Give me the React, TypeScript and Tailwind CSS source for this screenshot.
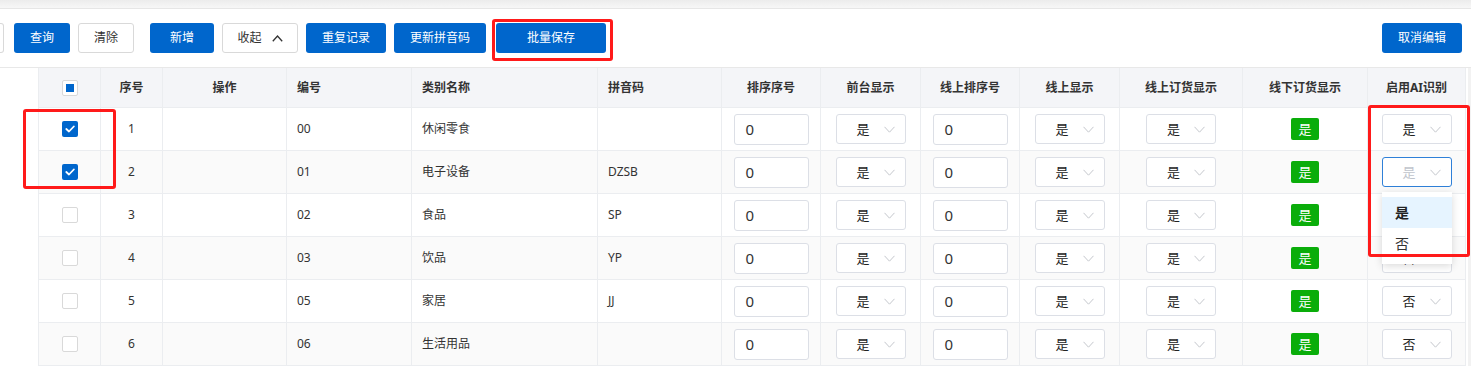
import React from "react";

const FONT = { fontFamily: '"Noto Sans", "Noto Sans CJK SC", sans-serif' };

const Chevron = ({ color = "#c4c7cc" }: { color?: string }) => (
  <svg width="11" height="7" viewBox="0 0 11 7" className="shrink-0">
    <path d="M0.5 0.8 L5.5 6.2 L10.5 0.8" stroke={color} strokeWidth="1" fill="none" />
  </svg>
);

const ChevronUp = () => (
  <svg width="11" height="7" viewBox="0 0 11 7" className="shrink-0">
    <path d="M0.8 6.2 L5.5 1 L10.2 6.2" stroke="#333" strokeWidth="1.3" fill="none" />
  </svg>
);

const Check = () => (
  <svg width="10" height="8" viewBox="0 0 10 8">
    <path d="M1.3 4 L4 6.5 L8.8 1.5" stroke="white" strokeWidth="1.8" fill="none" strokeLinecap="round" strokeLinejoin="round" />
  </svg>
);

const Checkbox = ({ checked }: { checked?: boolean }) =>
  checked ? (
    <div className="flex h-[16px] w-[16px] items-center justify-center rounded-[2px] bg-[#0066cc]">
      <Check />
    </div>
  ) : (
    <div className="h-[16px] w-[16px] rounded-[2px] border border-[#d9d9d9] bg-white" />
  );

const Select = ({ v, focused }: { v: string; focused?: boolean }) => (
  <div
    className={
      focused
        ? "flex h-[30px] w-[70px] items-center justify-between rounded-[3px] border border-[#2f80d8] bg-white pl-[20px] pr-[10px]"
        : "flex h-[30px] w-[70px] items-center justify-between rounded-[3px] border border-[#dcdfe6] bg-white pl-[20px] pr-[10px]"
    }
  >
    <span className={focused ? "text-[13px] leading-none text-[#c0c4cc]" : "text-[13px] leading-none text-[#222]"}>{v}</span>
    <Chevron />
  </div>
);

const Input = () => (
  <div className="flex h-[31px] w-[75px] items-center rounded-[3px] border border-[#dcdfe6] bg-white pl-[11px] text-[15px] leading-none text-[#333]">
    0
  </div>
);

const Badge = () => (
  <div className="flex h-[22px] w-[28px] items-center justify-center rounded-[2px] bg-[#0aad0a] text-[13px] leading-none text-white">
    是
  </div>
);

type Row = { checked: boolean; no: string; code: string; name: string; py: string; ai: string; focused?: boolean };

const rows: Row[] = [
  { checked: true, no: "1", code: "00", name: "休闲零食", py: "", ai: "是" },
  { checked: true, no: "2", code: "01", name: "电子设备", py: "DZSB", ai: "是", focused: true },
  { checked: false, no: "3", code: "02", name: "食品", py: "SP", ai: "是" },
  { checked: false, no: "4", code: "03", name: "饮品", py: "YP", ai: "否" },
  { checked: false, no: "5", code: "05", name: "家居", py: "JJ", ai: "否" },
  { checked: false, no: "6", code: "06", name: "生活用品", py: "", ai: "否" },
];

const headers: { t: string; left?: boolean }[] = [
  { t: "" },
  { t: "序号" },
  { t: "操作" },
  { t: "编号", left: true },
  { t: "类别名称", left: true },
  { t: "拼音码", left: true },
  { t: "排序序号" },
  { t: "前台显示" },
  { t: "线上排序号" },
  { t: "线上显示" },
  { t: "线上订货显示" },
  { t: "线下订货显示" },
  { t: "启用AI识别" },
];

const GRID =
  "grid grid-cols-[62px_62px_124px_125px_186px_124px_99px_100px_99px_100px_123px_125px_98px]";

const cellC = "flex items-center justify-center border-r border-b border-[#ebedf0]";
const cellL = "flex items-center justify-start pl-[10px] border-r border-b border-[#ebedf0]";

const BlueBtn = ({ children, w }: { children: React.ReactNode; w: string }) => (
  <button className={`flex h-[30px] ${w} items-center justify-center rounded-[3px] bg-[#0066cc] text-[12px] leading-none text-white`}>
    {children}
  </button>
);

const WhiteBtn = ({ children, w }: { children: React.ReactNode; w: string }) => (
  <button className={`flex h-[30px] ${w} items-center justify-center rounded-[3px] border border-[#d9d9d9] bg-white text-[12px] leading-none text-[#333]`}>
    {children}
  </button>
);

export default function App() {
  return (
    <div className="relative h-[369px] w-[1471px] overflow-hidden bg-white text-[#333]" style={FONT}>
      {/* top band */}
      <div className="h-[9px] border-b border-[#e6e6e6] bg-gradient-to-b from-[#ececec] to-[#f7f7f7]" />
      {/* toolbar */}
      <div className="flex h-[59px] items-center border-b border-[#e8e8e8]">
        <div className="h-[30px] w-[4px] rounded-r-[3px] border border-l-0 border-[#d9d9d9]" />
        <div className="ml-[10px]">
          <BlueBtn w="w-[56px]">查询</BlueBtn>
        </div>
        <div className="ml-[8px]">
          <WhiteBtn w="w-[56px]">清除</WhiteBtn>
        </div>
        <div className="ml-[16px]">
          <BlueBtn w="w-[64px]">新增</BlueBtn>
        </div>
        <div className="ml-[8px]">
          <WhiteBtn w="w-[76px]">
            <span className="mr-[10px]">收起</span>
            <ChevronUp />
          </WhiteBtn>
        </div>
        <div className="ml-[8px]">
          <BlueBtn w="w-[80px]">重复记录</BlueBtn>
        </div>
        <div className="ml-[8px]">
          <BlueBtn w="w-[92px]">更新拼音码</BlueBtn>
        </div>
        <div className="ml-[10px]">
          <BlueBtn w="w-[110px]">批量保存</BlueBtn>
        </div>
        <div className="ml-auto mr-[9px]">
          <BlueBtn w="w-[80px]">取消编辑</BlueBtn>
        </div>
      </div>

      {/* table */}
      <div className="flex">
        <div className="w-[38px] shrink-0" />
        <div className="border-l border-[#ebedf0]">
          <div className={`${GRID} h-[40px] bg-[#f4f5f8]`}>
            {headers.map((h, i) => (
              <div key={i} className={`${h.left ? cellL : cellC} text-[12px] font-bold leading-none text-[#333]`}>
                {i === 0 ? (
                  <div className="flex h-[16px] w-[16px] items-center justify-center rounded-[2px] border border-[#d9d9d9] bg-white">
                    <div className="h-[8px] w-[8px] bg-[#0066cc]" />
                  </div>
                ) : (
                  h.t
                )}
              </div>
            ))}
          </div>
          {rows.map((r, idx) => (
            <div key={idx} className={`${GRID} h-[43px] ${idx % 2 === 1 ? "bg-[#fafafa]" : "bg-white"} text-[12px] leading-none text-[#333]`}>
              <div className={cellC}>
                <Checkbox checked={r.checked} />
              </div>
              <div className={cellC}>{r.no}</div>
              <div className={cellC} />
              <div className={cellL}>{r.code}</div>
              <div className={cellL}>{r.name}</div>
              <div className={cellL}>{r.py}</div>
              <div className={cellC}>
                <Input />
              </div>
              <div className={cellC}>
                <Select v="是" />
              </div>
              <div className={cellC}>
                <Input />
              </div>
              <div className={cellC}>
                <Select v="是" />
              </div>
              <div className={cellC}>
                <Select v="是" />
              </div>
              <div className={cellC}>
                <Badge />
              </div>
              <div className={cellC}>
                <Select v={r.ai} focused={r.focused} />
              </div>
            </div>
          ))}
        </div>
        <div className="ml-[2px] flex-1 bg-[#f2f2f2]" />
      </div>

      {/* dropdown menu */}
      <div className="absolute left-[1382px] top-[192px] w-[70px] bg-white py-[5px] shadow-[0_2px_8px_rgba(0,0,0,0.15)]">
        <div className="flex h-[31px] items-center bg-[#e6f4ff] pl-[13px] text-[14px] font-bold leading-none text-[#222]">是</div>
        <div className="flex h-[31px] items-center pl-[13px] text-[14px] leading-none text-[#333]">否</div>
      </div>

      {/* red annotation boxes */}
      <div className="pointer-events-none absolute left-[23px] top-[109px] h-[80px] w-[93px] rounded-[3px] border-[3px] border-[#ff1a1a]" />
      <div className="pointer-events-none absolute left-[492px] top-[19px] h-[42px] w-[121px] rounded-[3px] border-[3px] border-[#ff1a1a]" />
      <div className="pointer-events-none absolute left-[1368px] top-[105px] h-[152px] w-[102px] rounded-[3px] border-[3px] border-[#ff1a1a]" />
    </div>
  );
}
